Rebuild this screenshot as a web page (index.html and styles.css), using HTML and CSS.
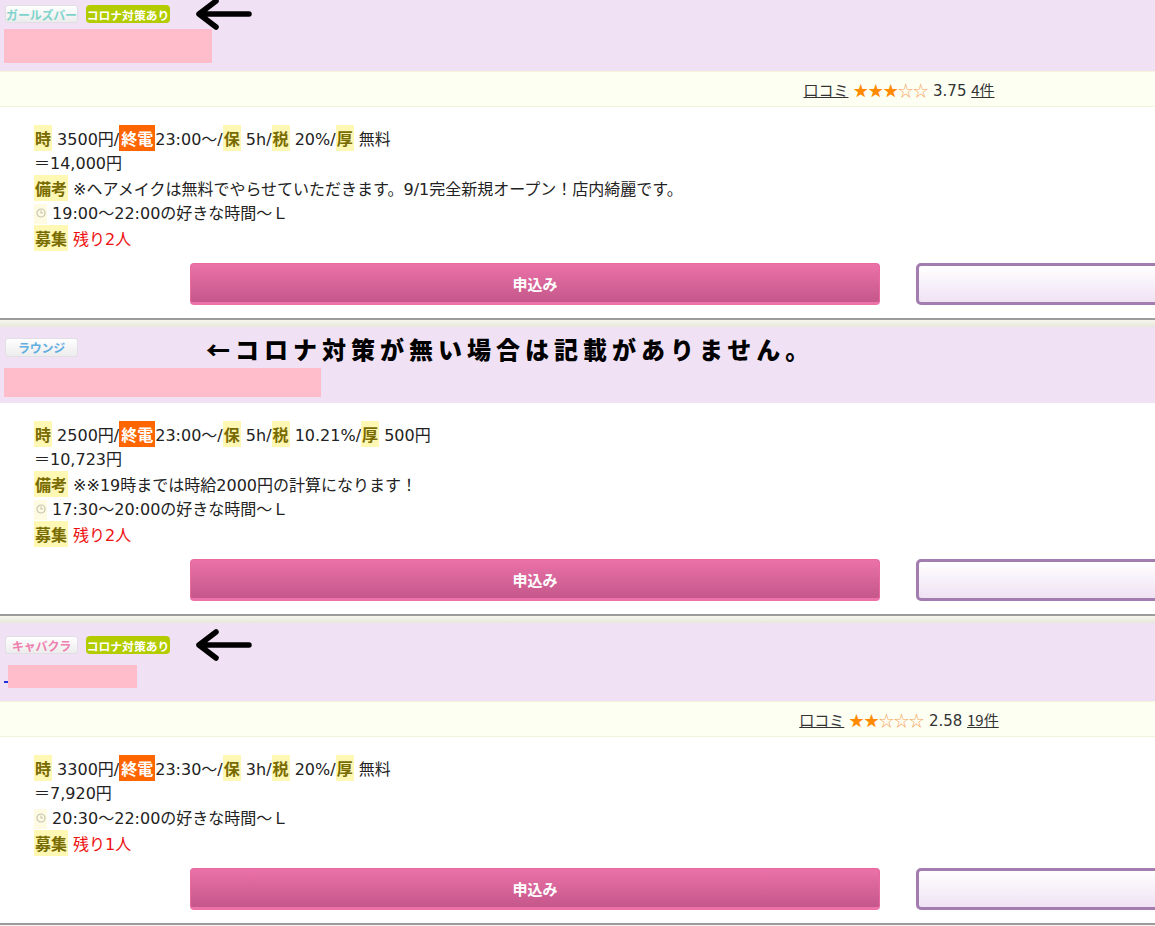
FILE: index.html
```html
<!DOCTYPE html>
<html lang="ja">
<head>
<meta charset="utf-8">
<title>求人一覧</title>
<link rel="stylesheet" href="styles.css">
</head>
<body>
<main class="list">

  <section class="card">
    <div class="head head-1">
      <div class="tags">
        <span class="genre genre-girls">ガールズバー</span>
        <span class="corona">コロナ対策あり</span>
        <svg class="arrow" viewBox="0 0 58 34" width="58" height="34"><path d="M55 17H5M22 4L5 17L22 30" fill="none" stroke="#000" stroke-width="5.5" stroke-linecap="round" stroke-linejoin="round"/></svg>
      </div>
      <div class="name"><span class="mask mask-1"></span></div>
    </div>
    <div class="review">
      <div class="review-in"><a class="ul">口コミ</a> <span class="stars">★★★<span class="off">☆☆</span></span> 3.75 <a class="ul">4件</a></div>
    </div>
    <div class="body">
      <p class="line"><span class="lb">時</span> 3500円/<span class="lb-or">終電</span>23:00～/<span class="lb">保</span> 5h/<span class="lb">税</span> 20%/<span class="lb">厚</span> 無料</p>
      <p class="line">＝14,000円</p>
      <p class="line"><span class="lb">備考</span> ※ヘアメイクは無料でやらせていただきます。9/1完全新規オープン！店内綺麗です。</p>
      <p class="line"><span class="lb-clock"><svg viewBox="0 0 10 10" width="10" height="10"><circle cx="5" cy="5" r="4" fill="none" stroke="#c4c4b4" stroke-width="1.2"/><path d="M5 2.6V5H7" fill="none" stroke="#c4c4b4" stroke-width="1.1"/></svg></span> 19:00～22:00の好きな時間～Ｌ</p>
      <p class="line"><span class="lb">募集</span> <span class="red">残り2人</span></p>
      <div class="actions"><a class="btn-apply">申込み</a><a class="btn-sub"></a></div>
    </div>
  </section>
  <div class="sep"></div>

  <section class="card">
    <div class="head head-2">
      <div class="tags">
        <span class="genre genre-lounge">ラウンジ</span>
        <span class="note">←コロナ対策が無い場合は記載がありません。</span>
      </div>
      <div class="name"><span class="mask mask-2"></span></div>
    </div>
    <div class="body">
      <p class="line"><span class="lb">時</span> 2500円/<span class="lb-or">終電</span>23:00～/<span class="lb">保</span> 5h/<span class="lb">税</span> 10.21%/<span class="lb">厚</span> 500円</p>
      <p class="line">＝10,723円</p>
      <p class="line"><span class="lb">備考</span> ※※19時までは時給2000円の計算になります！</p>
      <p class="line"><span class="lb-clock"><svg viewBox="0 0 10 10" width="10" height="10"><circle cx="5" cy="5" r="4" fill="none" stroke="#c4c4b4" stroke-width="1.2"/><path d="M5 2.6V5H7" fill="none" stroke="#c4c4b4" stroke-width="1.1"/></svg></span> 17:30～20:00の好きな時間～Ｌ</p>
      <p class="line"><span class="lb">募集</span> <span class="red">残り2人</span></p>
      <div class="actions"><a class="btn-apply">申込み</a><a class="btn-sub"></a></div>
    </div>
  </section>
  <div class="sep"></div>

  <section class="card">
    <div class="head head-3">
      <div class="tags">
        <span class="genre genre-caba">キャバクラ</span>
        <span class="corona">コロナ対策あり</span>
        <svg class="arrow" viewBox="0 0 58 34" width="58" height="34"><path d="M55 17H5M22 4L5 17L22 30" fill="none" stroke="#000" stroke-width="5.5" stroke-linecap="round" stroke-linejoin="round"/></svg>
      </div>
      <div class="name"><span class="link-bit"></span><span class="mask mask-3"></span></div>
    </div>
    <div class="review">
      <div class="review-in"><a class="ul">口コミ</a> <span class="stars">★★<span class="off">☆☆☆</span></span> 2.58 <a class="ul">19件</a></div>
    </div>
    <div class="body">
      <p class="line"><span class="lb">時</span> 3300円/<span class="lb-or">終電</span>23:30～/<span class="lb">保</span> 3h/<span class="lb">税</span> 20%/<span class="lb">厚</span> 無料</p>
      <p class="line">＝7,920円</p>
      <p class="line"><span class="lb-clock"><svg viewBox="0 0 10 10" width="10" height="10"><circle cx="5" cy="5" r="4" fill="none" stroke="#c4c4b4" stroke-width="1.2"/><path d="M5 2.6V5H7" fill="none" stroke="#c4c4b4" stroke-width="1.1"/></svg></span> 20:30～22:00の好きな時間～Ｌ</p>
      <p class="line"><span class="lb">募集</span> <span class="red">残り1人</span></p>
      <div class="actions"><a class="btn-apply">申込み</a><a class="btn-sub"></a></div>
    </div>
  </section>
  <div class="sep"></div>

</main>
</body>
</html>
```

FILE: styles.css
```css
html, body {
  margin: 0;
  padding: 0;
  background: #fff;
}
body {
  width: 1155px;
  overflow: hidden;
  font-family: "Noto Sans CJK JP", "Noto Sans", sans-serif;
  color: #333;
}
.list {
  display: flex;
  flex-direction: column;
}

/* header */
.head {
  background: #f0e2f4;
  padding-left: 5px;
}
.head-1 { padding-top: 5px; padding-bottom: 8px; }
.head-2 { padding-top: 11px; padding-bottom: 6px; }
.head-3 { padding-top: 13px; padding-bottom: 13px; }

.tags {
  display: flex;
  align-items: center;
  height: 18px;
}
.head-2 .tags { height: 19px; }

.genre {
  box-sizing: border-box;
  width: 73px;
  height: 18px;
  display: flex;
  align-items: center;
  justify-content: center;
  border: 1px solid #e2dfe4;
  border-radius: 3px;
  background: linear-gradient(#ffffff, #ececec);
  font-size: 12px;
  font-weight: 700;
  letter-spacing: -0.2px;
}
.head-2 .genre { height: 19px; }
.genre-girls { color: #7fd3cc; }
.genre-lounge { color: #63aee0; }
.genre-caba { color: #ee7fae; }

.corona {
  margin-left: 8px;
  width: 84px;
  height: 18px;
  box-sizing: border-box;
  display: flex;
  align-items: center;
  justify-content: center;
  background: #b3cc00;
  border-radius: 4px;
  color: #fff;
  font-size: 11.8px;
  font-weight: 700;
}
.arrow {
  margin: -8px 0 -8px 24px;
}
.note {
  margin-left: 128px;
  margin-top: 2px;
  font-size: 24px;
  font-weight: 900;
  letter-spacing: 5px;
  color: #000;
  line-height: 24px;
  white-space: nowrap;
}

.name {
  display: flex;
  align-items: flex-end;
  margin-top: 6px;
}
.head-2 .name, .head-3 .name { margin-top: 11px; }
.mask {
  display: block;
  background: #ffbccb;
}
.mask-1 { width: 208px; height: 34px; margin-left: -1px; }
.mask-2 { width: 317px; height: 29px; margin-left: -1px; }
.mask-3 { width: 129px; height: 23px; }
.link-bit {
  display: block;
  width: 4px;
  height: 2px;
  margin-left: -1px;
  margin-bottom: 5px;
  background: #2030e0;
}

/* review bar */
.review {
  display: grid;
  grid-template-columns: 1fr 512px;
  height: 36px;
  align-items: center;
  background: #fdfff3;
  border-top: 1px solid #f6f4dc;
  border-bottom: 1px solid #f3f3dc;
  box-sizing: border-box;
}
.review-in {
  grid-column: 2;
  text-align: center;
  font-family: "DejaVu Sans", "Noto Sans CJK JP", sans-serif;
  font-size: 15px;
  color: #333;
  white-space: nowrap;
}
.ul {
  font-family: "Noto Sans CJK JP", sans-serif;
  font-size: 15px;
  text-decoration: underline;
  color: #333;
}
.stars {
  font-family: "Noto Sans CJK JP", sans-serif;
  color: #ff8a00;
  font-size: 15px;
}
.stars .off { color: #f7a25a; }

/* body */
.body {
  padding: 19px 0 13px 34px;
  background: #fff;
}
.line {
  margin: 0;
  height: 25px;
  font-family: "DejaVu Sans", "Noto Sans CJK JP", sans-serif;
  font-size: 16px;
  line-height: 25px;
  color: #222;
  white-space: nowrap;
}
.lb, .lb-or {
  font-family: "Noto Sans CJK JP", sans-serif;
  font-size: 16px;
  font-weight: 700;
}
.lb {
  background: #fff7b4;
  color: #786b00;
  padding: 1px 1px;
}
.lb-or {
  background: #ff6600;
  color: #fff;
  padding: 1px 2px;
}
.lb-clock {
  display: inline-block;
  width: 13px;
  height: 20px;
  vertical-align: -5px;
  background: #fffbe2;
}
.lb-clock svg {
  display: block;
  margin: 4px auto 0;
}
.red {
  color: #ee1111;
}

.actions {
  display: flex;
  margin-top: 12px;
  padding-left: 156px;
  gap: 36px;
}
.btn-apply {
  box-sizing: border-box;
  flex: none;
  width: 690px;
  height: 42px;
  display: flex;
  align-items: center;
  justify-content: center;
  border: 1px solid #e9689f;
  border-bottom: 3px solid #ee72aa;
  border-radius: 4px;
  background: linear-gradient(#eb72a8, #c4578b);
  color: #fff;
  font-size: 15px;
  font-weight: 700;
}
.btn-sub {
  box-sizing: border-box;
  flex: none;
  width: 300px;
  height: 42px;
  border: 3px solid #a37cb0;
  border-radius: 5px;
  background: linear-gradient(#ffffff, #efe2f4);
}

.sep {
  height: 7px;
  border-top: 2px solid #9c9c9c;
  background: linear-gradient(#f6f6ee, #e6e6da);
}
```
